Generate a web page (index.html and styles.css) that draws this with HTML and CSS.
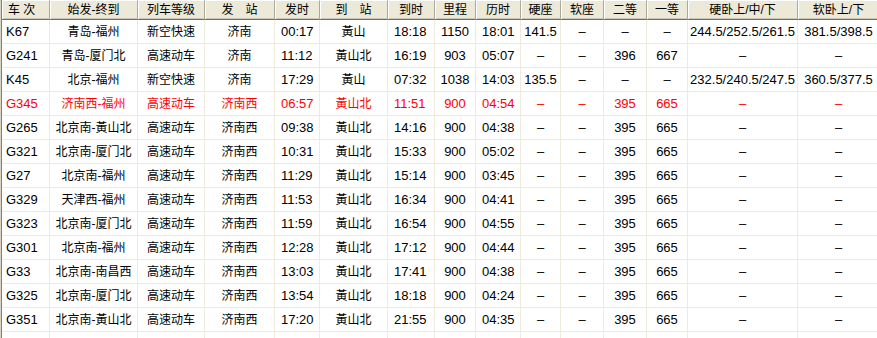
FILE: index.html
```html
<!DOCTYPE html>
<html lang="zh-CN">
<head>
<meta charset="utf-8">
<title>列车时刻</title>
<link rel="stylesheet" href="styles.css">
</head>
<body>
<div class="view">
  <div class="row head">
    <div class="c first">车 次</div><div class="c">始发-终到</div><div class="c">列车等级</div><div class="c">发&emsp;站</div><div class="c">发时</div><div class="c">到&emsp;站</div><div class="c">到时</div><div class="c">里程</div><div class="c">历时</div><div class="c">硬座</div><div class="c">软座</div><div class="c">二等</div><div class="c">一等</div><div class="c">硬卧上/中/下</div><div class="c">软卧上/下</div>
  </div>
  <div class="row">
    <div class="c first">K67</div><div class="c z">青岛-福州</div><div class="c z">新空快速</div><div class="c z">济南</div><div class="c l">00:17</div><div class="c z">黃山</div><div class="c l">18:18</div><div class="c">1150</div><div class="c l">18:01</div><div class="c">141.5</div><div class="c">–</div><div class="c">–</div><div class="c">–</div><div class="c">244.5/252.5/261.5</div><div class="c">381.5/398.5</div>
  </div>
  <div class="row">
    <div class="c first">G241</div><div class="c z">青岛-厦门北</div><div class="c z">高速动车</div><div class="c z">济南</div><div class="c l">11:12</div><div class="c z">黃山北</div><div class="c l">16:19</div><div class="c">903</div><div class="c l">05:07</div><div class="c">–</div><div class="c">–</div><div class="c">396</div><div class="c">667</div><div class="c">–</div><div class="c">–</div>
  </div>
  <div class="row">
    <div class="c first">K45</div><div class="c z">北京-福州</div><div class="c z">新空快速</div><div class="c z">济南</div><div class="c l">17:29</div><div class="c z">黃山</div><div class="c l">07:32</div><div class="c">1038</div><div class="c l">14:03</div><div class="c">135.5</div><div class="c">–</div><div class="c">–</div><div class="c">–</div><div class="c">232.5/240.5/247.5</div><div class="c">360.5/377.5</div>
  </div>
  <div class="row hot">
    <div class="c first">G345</div><div class="c z">济南西-福州</div><div class="c z">高速动车</div><div class="c z">济南西</div><div class="c l">06:57</div><div class="c z">黃山北</div><div class="c l">11:51</div><div class="c">900</div><div class="c l">04:54</div><div class="c">–</div><div class="c">–</div><div class="c">395</div><div class="c">665</div><div class="c">–</div><div class="c">–</div>
  </div>
  <div class="row">
    <div class="c first">G265</div><div class="c z">北京南-黃山北</div><div class="c z">高速动车</div><div class="c z">济南西</div><div class="c l">09:38</div><div class="c z">黃山北</div><div class="c l">14:16</div><div class="c">900</div><div class="c l">04:38</div><div class="c">–</div><div class="c">–</div><div class="c">395</div><div class="c">665</div><div class="c">–</div><div class="c">–</div>
  </div>
  <div class="row">
    <div class="c first">G321</div><div class="c z">北京南-厦门北</div><div class="c z">高速动车</div><div class="c z">济南西</div><div class="c l">10:31</div><div class="c z">黃山北</div><div class="c l">15:33</div><div class="c">900</div><div class="c l">05:02</div><div class="c">–</div><div class="c">–</div><div class="c">395</div><div class="c">665</div><div class="c">–</div><div class="c">–</div>
  </div>
  <div class="row">
    <div class="c first">G27</div><div class="c z">北京南-福州</div><div class="c z">高速动车</div><div class="c z">济南西</div><div class="c l">11:29</div><div class="c z">黃山北</div><div class="c l">15:14</div><div class="c">900</div><div class="c l">03:45</div><div class="c">–</div><div class="c">–</div><div class="c">395</div><div class="c">665</div><div class="c">–</div><div class="c">–</div>
  </div>
  <div class="row">
    <div class="c first">G329</div><div class="c z">天津西-福州</div><div class="c z">高速动车</div><div class="c z">济南西</div><div class="c l">11:53</div><div class="c z">黃山北</div><div class="c l">16:34</div><div class="c">900</div><div class="c l">04:41</div><div class="c">–</div><div class="c">–</div><div class="c">395</div><div class="c">665</div><div class="c">–</div><div class="c">–</div>
  </div>
  <div class="row">
    <div class="c first">G323</div><div class="c z">北京南-厦门北</div><div class="c z">高速动车</div><div class="c z">济南西</div><div class="c l">11:59</div><div class="c z">黃山北</div><div class="c l">16:54</div><div class="c">900</div><div class="c l">04:55</div><div class="c">–</div><div class="c">–</div><div class="c">395</div><div class="c">665</div><div class="c">–</div><div class="c">–</div>
  </div>
  <div class="row">
    <div class="c first">G301</div><div class="c z">北京南-福州</div><div class="c z">高速动车</div><div class="c z">济南西</div><div class="c l">12:28</div><div class="c z">黃山北</div><div class="c l">17:12</div><div class="c">900</div><div class="c l">04:44</div><div class="c">–</div><div class="c">–</div><div class="c">395</div><div class="c">665</div><div class="c">–</div><div class="c">–</div>
  </div>
  <div class="row">
    <div class="c first">G33</div><div class="c z">北京南-南昌西</div><div class="c z">高速动车</div><div class="c z">济南西</div><div class="c l">13:03</div><div class="c z">黃山北</div><div class="c l">17:41</div><div class="c">900</div><div class="c l">04:38</div><div class="c">–</div><div class="c">–</div><div class="c">395</div><div class="c">665</div><div class="c">–</div><div class="c">–</div>
  </div>
  <div class="row">
    <div class="c first">G325</div><div class="c z">北京南-厦门北</div><div class="c z">高速动车</div><div class="c z">济南西</div><div class="c l">13:54</div><div class="c z">黃山北</div><div class="c l">18:18</div><div class="c">900</div><div class="c l">04:24</div><div class="c">–</div><div class="c">–</div><div class="c">395</div><div class="c">665</div><div class="c">–</div><div class="c">–</div>
  </div>
  <div class="row">
    <div class="c first">G351</div><div class="c z">北京南-黃山北</div><div class="c z">高速动车</div><div class="c z">济南西</div><div class="c l">17:20</div><div class="c z">黃山北</div><div class="c l">21:55</div><div class="c">900</div><div class="c l">04:35</div><div class="c">–</div><div class="c">–</div><div class="c">395</div><div class="c">665</div><div class="c">–</div><div class="c">–</div>
  </div>
  <div class="row filler">
    <div class="c first"></div><div class="c"></div><div class="c"></div><div class="c"></div><div class="c"></div><div class="c"></div><div class="c"></div><div class="c"></div><div class="c"></div><div class="c"></div><div class="c"></div><div class="c"></div><div class="c"></div><div class="c"></div><div class="c"></div>
  </div>
</div>
</body>
</html>
```
FILE: styles.css
```css
html, body {
  margin: 0;
  padding: 0;
  background: #ffffff;
  overflow: hidden;
  height: 338px;
}

.view {
  border-left: 1px solid #d8d4c4;
  width: 876px;
  overflow: hidden;
  font-family: "Liberation Sans", "Noto Sans CJK SC", sans-serif;
  font-size: 13px;
  color: #000;
}

.view > .row {
  display: grid;
  grid-template-columns: 48px 88px 67px 70px 45px 68px 47px 41px 45px 40px 43px 43px 41px 110px 82px;
  height: 24px;
  border-left: 1px solid #808080;
}

.c {
  box-sizing: border-box;
  border-right: 1px solid #eeebdc;
  border-bottom: 1px solid #eeebdc;
  display: flex;
  align-items: center;
  justify-content: center;
  white-space: pre;
  overflow: hidden;
  line-height: 1;
}

.c.first {
  justify-content: flex-start;
  padding-left: 4px;
}

.c.l {
  justify-content: flex-start;
  padding-left: 6px;
}

.c.z {
  font-size: 12px;
}

.row.hot .c {
  color: #ff0000;
}

.view > .row.filler {
  height: 6px;
}

.row.filler .c {
  border-bottom: none;
}

.row.head {
  height: 20px;
}

.row.head .c {
  background: #ece9d8;
  font-size: 12px;
  border-top: 1px solid #ffffff;
  border-right: 1px solid #aca899;
  border-bottom: 1px solid #716f64;
  box-shadow: inset 1px 0 0 #ffffff, inset 0 -1px 0 #cbc7b8;
  padding-bottom: 1px;
}

.row.head .c.first {
  padding-left: 6px;
}
```
